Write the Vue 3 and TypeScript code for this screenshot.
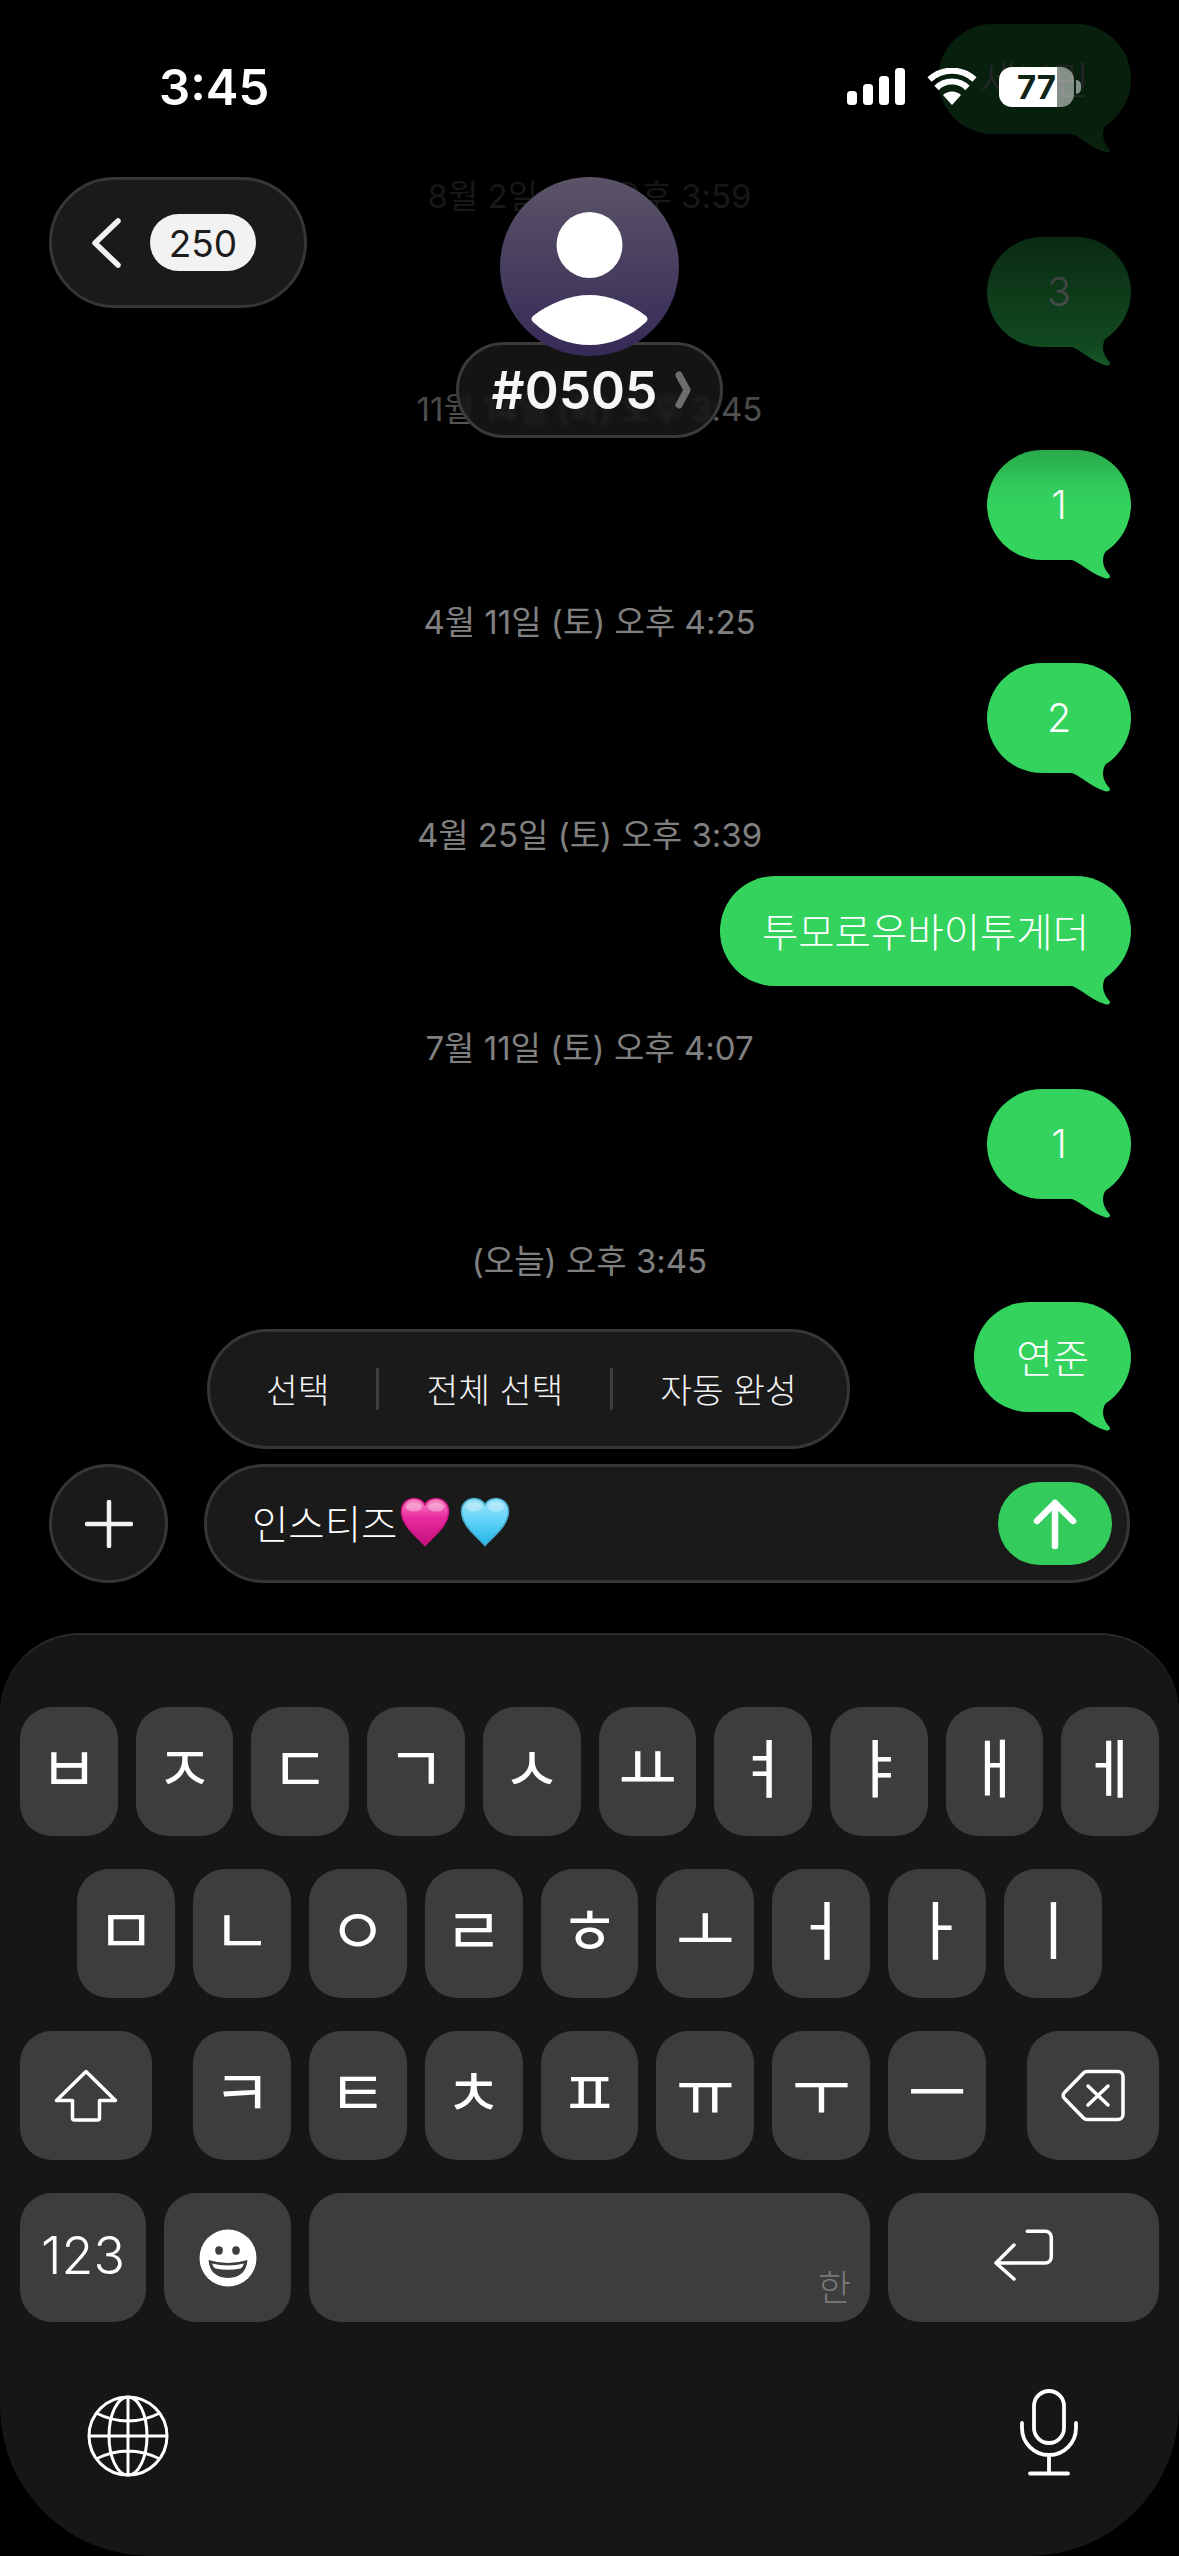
<template>
  <div class="phone">
    <!-- message list -->
    <div class="thread">
      <template v-for="(msg, i) in messages" :key="i">
        <div class="bubble" :class="{ 'bubble-ko': !isDigits(msg.text) }">
          {{ msg.text }}
          <svg class="tail" width="70" height="40" viewBox="0 0 70 40">
            <path d="M8 19 L11 20 C18 22 32 35 45 38.5 C48 39 50 37 48.5 35 C43 29 39 20 45 10.5 L30 0 Z" fill="#33d35e" />
          </svg>
        </div>
        <div v-if="msg.time" class="stamp">{{ msg.time }}</div>
      </template>
    </div>
    <div class="fade"></div>

    <!-- status bar -->
    <div class="status">
      <span class="clock">3:45</span>
      <div class="status-icons">
        <svg width="58" height="38" viewBox="0 0 58 38" fill="#fff">
          <rect x="0" y="23" width="10" height="14" rx="3.5" />
          <rect x="16" y="16" width="10" height="21" rx="3.5" />
          <rect x="32" y="8" width="10" height="29" rx="3.5" />
          <rect x="48" y="0" width="10" height="37" rx="3.5" />
        </svg>
        <svg width="50" height="38" viewBox="0 0 50 38" fill="none" stroke="#fff">
          <path d="M16 27 A13 13 0 0 1 34 27 L25 37 Z" fill="#fff" stroke="none" />
          <path d="M9.5 20 A22 22 0 0 1 40.5 20" stroke-width="6" />
          <path d="M2.5 11.5 A33 33 0 0 1 47.5 11.5" stroke-width="6" />
        </svg>
        <div class="battery">
          <span class="battery-level">77</span>
          <span class="battery-nub"></span>
        </div>
      </div>
    </div>

    <!-- conversation header -->
    <div class="header">
      <div class="back glass">
        <svg width="30" height="50" viewBox="0 0 30 50" fill="none" stroke="#f2f2f2" stroke-width="5.5" stroke-linecap="round" stroke-linejoin="round">
          <path d="M26 3 L3 25 L26 47" />
        </svg>
        <span class="count">250</span>
      </div>
      <div class="contact">
        <svg class="avatar" width="179" height="179" viewBox="0 0 179 179">
          <defs>
            <linearGradient id="avatarFill" x1="0" y1="0" x2="0" y2="1">
              <stop offset="0" stop-color="#5b5468" />
              <stop offset="1" stop-color="#352a57" />
            </linearGradient>
          </defs>
          <circle cx="89.5" cy="89.5" r="89.5" fill="url(#avatarFill)" />
          <circle cx="89.5" cy="68" r="33" fill="#fff" />
          <path d="M33 139 C50 126 70 118 89.5 118 C109 118 129 126 146 139 C148 141 148 143 146 145 C130 160 110 168 89.5 168 C69 168 49 160 33 145 C31 143 31 141 33 139 Z" fill="#fff" />
        </svg>
        <div class="name glass">
          <span>#0505</span>
          <svg width="16" height="38" viewBox="0 0 16 38" fill="none" stroke="#6e6e6e" stroke-width="7" stroke-linecap="round" stroke-linejoin="round">
            <path d="M4 4 L12 19 L4 34" />
          </svg>
        </div>
      </div>
    </div>

    <!-- composer and keyboard -->
    <div class="composer">
      <div class="edit-menu glass">
        <span class="menu-item">선택</span>
        <i class="menu-sep"></i>
        <span class="menu-item">전체 선택</span>
        <i class="menu-sep"></i>
        <span class="menu-item">자동 완성</span>
      </div>

      <div class="input-row">
        <div class="plus glass">
          <svg width="48" height="48" viewBox="0 0 48 48" stroke="#f2f2f2" stroke-width="4.5" stroke-linecap="round">
            <path d="M24 2 V46 M2 24 H46" />
          </svg>
        </div>
        <div class="field glass">
          <span class="field-text">인스티즈</span>
          <svg class="heart" width="50" height="50" viewBox="0 0 50 50">
            <defs>
              <linearGradient id="pinkFill" x1="0" y1="0" x2="0" y2="1">
                <stop offset="0" stop-color="#f58cc2" />
                <stop offset="0.4" stop-color="#ea2ba0" />
                <stop offset="1" stop-color="#c40f7c" />
              </linearGradient>
            </defs>
            <path :d="heartPath" fill="url(#pinkFill)" stroke="#d01488" stroke-width="1.5" />
            <ellipse cx="14" cy="10" rx="8" ry="4.5" fill="#fff" opacity="0.35" />
            <ellipse cx="36" cy="10" rx="8" ry="4.5" fill="#fff" opacity="0.35" />
          </svg>
          <svg class="heart" width="50" height="50" viewBox="0 0 50 50">
            <defs>
              <linearGradient id="blueFill" x1="0" y1="0" x2="0" y2="1">
                <stop offset="0" stop-color="#a4e4f5" />
                <stop offset="0.4" stop-color="#68d6fa" />
                <stop offset="1" stop-color="#20b6e6" />
              </linearGradient>
            </defs>
            <path :d="heartPath" fill="url(#blueFill)" stroke="#45a9c9" stroke-width="1.5" />
            <ellipse cx="14" cy="10" rx="8" ry="4.5" fill="#fff" opacity="0.3" />
            <ellipse cx="36" cy="10" rx="8" ry="4.5" fill="#fff" opacity="0.3" />
          </svg>
          <div class="send">
            <svg width="44" height="52" viewBox="0 0 44 52" fill="none" stroke="#fff" stroke-width="6.5" stroke-linecap="round" stroke-linejoin="round">
              <path d="M22 48 V5 M4 23 L22 5 L40 23" />
            </svg>
          </div>
        </div>
      </div>

      <div class="keyboard">
        <div class="rows">
          <div class="row">
            <div v-for="k in topRow" :key="k" class="key">{{ k }}</div>
          </div>
          <div class="row row-middle">
            <div v-for="k in middleRow" :key="k" class="key">{{ k }}</div>
          </div>
          <div class="row">
            <div class="key key-shift">
              <svg width="68" height="54" viewBox="0 0 68 54" fill="none" stroke="#fff" stroke-width="3.5" stroke-linejoin="round">
                <path d="M34 2.5 L4.5 31.5 H20.5 V49 a2 2 0 0 0 2 2 H45.5 a2 2 0 0 0 2-2 V31.5 H63.5 Z" />
              </svg>
            </div>
            <div v-for="k in bottomRow" :key="k" class="key">{{ k }}</div>
            <div class="key key-delete">
              <svg width="66" height="55" viewBox="0 0 66 55" fill="none" stroke="#fff" stroke-width="3.5" stroke-linecap="round">
                <path d="M27 3.5 H58 a5 5 0 0 1 5 5 V46.5 a5 5 0 0 1-5 5 H27 a5 5 0 0 1-3.5-1.5 L4.5 30.5 a4 4 0 0 1 0-6 L23.5 5 a5 5 0 0 1 3.5-1.5 Z" />
                <path d="M28 18 L48 37 M48 18 L28 37" />
              </svg>
            </div>
          </div>
          <div class="row">
            <div class="key key-num">123</div>
            <div class="key key-emoji">
              <svg width="58" height="58" viewBox="0 0 58 58">
                <circle cx="29" cy="29" r="28.5" fill="#fff" />
                <ellipse cx="20" cy="21.5" rx="3.8" ry="4.2" fill="#3d3d3d" />
                <ellipse cx="37" cy="21.5" rx="3.8" ry="4.2" fill="#3d3d3d" />
                <path d="M9.5 31 Q29 37 48.5 31 Q47 48.5 29 49 Q11 48.5 9.5 31 Z" fill="#3d3d3d" />
                <path d="M13 34.5 Q29 38.5 45 34.5 Q44 38 41.5 39.5 Q29 42 16.5 39.5 Q14 38 13 34.5 Z" fill="#fff" />
              </svg>
            </div>
            <div class="key key-space"><span>한</span></div>
            <div class="key key-return">
              <svg width="62" height="54" viewBox="0 0 62 54" fill="none" stroke="#fff" stroke-width="3.5" stroke-linecap="round" stroke-linejoin="round">
                <path d="M34.3 3.3 H52 a6 6 0 0 1 6.3 6.3 V29 a6 6 0 0 1-6 6 H3 M21 17 L3 35 L21 51" />
              </svg>
            </div>
          </div>
        </div>
        <div class="kb-footer">
          <svg width="82" height="82" viewBox="0 0 82 82" fill="none" stroke="#fff" stroke-width="3">
            <circle cx="41" cy="41" r="39" />
            <ellipse cx="41" cy="41" rx="19" ry="39" />
            <path d="M41 2 V80 M2 41 H80 M9 18 Q41 34 73 18 M9 64 Q41 48 73 64" />
          </svg>
          <svg class="mic" width="60" height="88" viewBox="0 0 60 88" fill="none" stroke="#fff" stroke-width="3.8" stroke-linecap="round">
            <rect x="15" y="2" width="30" height="52" rx="15" />
            <path d="M3 34 V39 a27 27 0 0 0 54 0 V34 M30 66 V84 M11 84.5 H49" />
          </svg>
        </div>
      </div>
    </div>
  </div>
</template>

<script setup lang="ts">
interface Message {
  text: string;
  time?: string;
}

const messages: Message[] = [
  { text: "세보민", time: "8월 2일 (토) 오후 3:59" },
  { text: "3", time: "11월 14일 (화) 오후 3:45" },
  { text: "1", time: "4월 11일 (토) 오후 4:25" },
  { text: "2", time: "4월 25일 (토) 오후 3:39" },
  { text: "투모로우바이투게더", time: "7월 11일 (토) 오후 4:07" },
  { text: "1", time: "(오늘) 오후 3:45" },
  { text: "연준" },
];

const topRow = ["ㅂ", "ㅈ", "ㄷ", "ㄱ", "ㅅ", "ㅛ", "ㅕ", "ㅑ", "ㅐ", "ㅔ"];
const middleRow = ["ㅁ", "ㄴ", "ㅇ", "ㄹ", "ㅎ", "ㅗ", "ㅓ", "ㅏ", "ㅣ"];
const bottomRow = ["ㅋ", "ㅌ", "ㅊ", "ㅍ", "ㅠ", "ㅜ", "ㅡ"];

const heartPath =
  "M25 48.5 C20 42 2 30 1.5 15 C1.2 6 8 1.5 14 1.5 C19 1.5 23 4 25 8 C27 4 31 1.5 36 1.5 C42 1.5 48.8 6 48.5 15 C48 30 30 42 25 48.5 Z";

function isDigits(text: string) {
  return /^\d+$/.test(text);
}
</script>

<style scoped>
.phone {
  position: relative;
  width: 1179px;
  height: 2556px;
  overflow: hidden;
  background: #000;
  color: #fff;
  font-family: Inter, "Noto Sans CJK KR", sans-serif;
}

.thread {
  display: flex;
  flex-direction: column;
  align-items: flex-end;
  padding: 24px 48px 0 0;
}
.bubble {
  position: relative;
  box-sizing: border-box;
  min-width: 144px;
  height: 110px;
  padding: 0 42px;
  display: flex;
  align-items: center;
  justify-content: center;
  border-radius: 55px;
  background: #33d35e;
  font-size: 39.5px;
  font-weight: 300;
  white-space: nowrap;
}
.bubble-ko {
  padding-bottom: 4px;
}
.tail {
  position: absolute;
  right: 0;
  bottom: -20px;
}
.stamp {
  align-self: stretch;
  padding-left: 48px;
  margin: 43.5px 0 23.5px;
  line-height: 36px;
  text-align: center;
  font-size: 33px;
  color: #808080;
}
.fade {
  position: absolute;
  top: 0;
  left: 0;
  right: 0;
  height: 510px;
  background: linear-gradient(
    to bottom,
    rgba(0, 0, 0, 0.85) 0,
    rgba(0, 0, 0, 0.85) 134px,
    rgba(0, 0, 0, 0.8) 237px,
    rgba(0, 0, 0, 0.65) 347px,
    rgba(0, 0, 0, 0.42) 407px,
    rgba(0, 0, 0, 0.2) 450px,
    rgba(0, 0, 0, 0.03) 490px,
    rgba(0, 0, 0, 0) 510px
  );
}

.status {
  position: absolute;
  top: 0;
  left: 0;
  right: 0;
  height: 174px;
  box-sizing: border-box;
  padding: 0 105px 0 159px;
  display: flex;
  align-items: center;
  justify-content: space-between;
}
.clock {
  font-size: 49px;
  font-weight: 600;
}
.status-icons {
  display: flex;
  align-items: center;
  gap: 22px;
}
.battery {
  position: relative;
  width: 75px;
  height: 40px;
  border-radius: 13px;
  background: linear-gradient(to right, #fff 77%, rgba(255, 255, 255, 0.5) 77%);
  display: flex;
  align-items: center;
  justify-content: center;
}
.battery-level {
  font-size: 33px;
  font-weight: 700;
  color: #10241a;
}
.battery-nub {
  position: absolute;
  right: -7px;
  top: 13px;
  width: 5px;
  height: 14px;
  border-radius: 0 7px 7px 0;
  background: rgba(255, 255, 255, 0.5);
}

.glass {
  box-sizing: border-box;
  border: 3px solid #363636;
  background: #1a1a1a;
}

.header {
  position: absolute;
  top: 177px;
  left: 0;
  right: 0;
  padding: 0 49px;
  display: grid;
  grid-template-columns: 1fr auto 1fr;
  align-items: start;
}
.back {
  width: 258px;
  height: 131px;
  border-radius: 66px;
  padding-left: 40px;
  display: flex;
  align-items: center;
  gap: 28px;
}
.count {
  width: 106px;
  height: 57px;
  border-radius: 29px;
  background: #f2f2f2;
  color: #1c1c1c;
  font-size: 37px;
  padding-top: 2px;
  box-sizing: border-box;
  display: flex;
  align-items: center;
  justify-content: center;
}
.contact {
  display: flex;
  flex-direction: column;
  align-items: center;
}
.avatar {
  position: relative;
  z-index: 1;
  display: block;
}
.name {
  width: 267px;
  height: 96px;
  margin-top: -14px;
  padding-left: 4px;
  border-radius: 48px;
  border-color: #3a3a3a;
  background: rgba(26, 26, 26, 0.78);
  backdrop-filter: blur(2px);
  display: flex;
  align-items: center;
  justify-content: center;
  gap: 18px;
  font-size: 51.5px;
  font-weight: 600;
  color: #f6f6f6;
}

.composer {
  position: absolute;
  left: 0;
  right: 0;
  bottom: 0;
}
.edit-menu {
  width: 643px;
  height: 120px;
  margin-left: 207px;
  border-radius: 60px;
  padding: 0 0 0 56px;
  display: flex;
  align-items: center;
  gap: 47px;
}
.menu-item {
  font-size: 34.5px;
  font-weight: 300;
  color: #f2f2f2;
  white-space: nowrap;
  padding-bottom: 3px;
}
.menu-sep {
  flex: none;
  width: 3px;
  height: 42px;
  background: #3d3d3d;
}
.input-row {
  display: flex;
  gap: 36px;
  margin: 15px 49px 50px;
}
.plus {
  width: 119px;
  height: 119px;
  border-radius: 50%;
  display: flex;
  align-items: center;
  justify-content: center;
  flex: none;
}
.field {
  flex: 1;
  height: 119px;
  border-radius: 60px;
  padding: 0 15px 0 45px;
  display: flex;
  align-items: center;
}
.field-text {
  font-size: 39.5px;
  font-weight: 300;
  margin-right: 3px;
  padding-bottom: 4px;
}
.heart {
  margin-right: 10px;
  margin-top: -4px;
}
.send {
  margin-left: auto;
  width: 114px;
  height: 83px;
  border-radius: 42px;
  background: #33cc5c;
  display: flex;
  align-items: center;
  justify-content: center;
}

.keyboard {
  box-sizing: border-box;
  height: 923px;
  padding: 72px 20px 0;
  border-top: 2px solid #2c2c2c;
  border-radius: 80px 80px 150px 150px;
  background: #161616;
}
.rows {
  display: flex;
  flex-direction: column;
  gap: 33px;
}
.row {
  display: flex;
  gap: 18px;
}
.row-middle {
  padding: 0 57px;
}
.key {
  flex: 1;
  height: 129px;
  border-radius: 32px;
  background: #3d3d3d;
  display: flex;
  align-items: center;
  justify-content: center;
  padding-bottom: 16px;
  box-sizing: border-box;
  font-size: 64px;
  font-family: "Noto Sans CJK KR", sans-serif;
  font-weight: 400;
}
.key-shift,
.key-delete,
.key-num,
.key-emoji,
.key-return {
  padding-bottom: 0;
}
.key-shift {
  flex: none;
  width: 132px;
  margin-right: 23px;
}
.key-delete {
  flex: none;
  width: 132px;
  margin-left: 23px;
}
.key-num {
  flex: none;
  width: 126px;
  padding-bottom: 4px;
  font-family: Inter, sans-serif;
  font-size: 52px;
  font-weight: 350;
}
.key-emoji {
  flex: none;
  width: 127px;
}
.key-space {
  align-items: flex-end;
  justify-content: flex-end;
  padding: 0 19px 11px 0;
  font-size: 36px;
  font-weight: 300;
  color: #7a7a7a;
}
.key-return {
  flex: none;
  width: 271px;
  padding-bottom: 6px;
}
.kb-footer {
  margin-top: 67px;
  padding: 0 80px 0 67px;
  display: flex;
  align-items: center;
  justify-content: space-between;
}
.mic {
  margin-bottom: 5px;
}
</style>

<style>
html,
body {
  margin: 0;
  background: #000;
}
</style>
